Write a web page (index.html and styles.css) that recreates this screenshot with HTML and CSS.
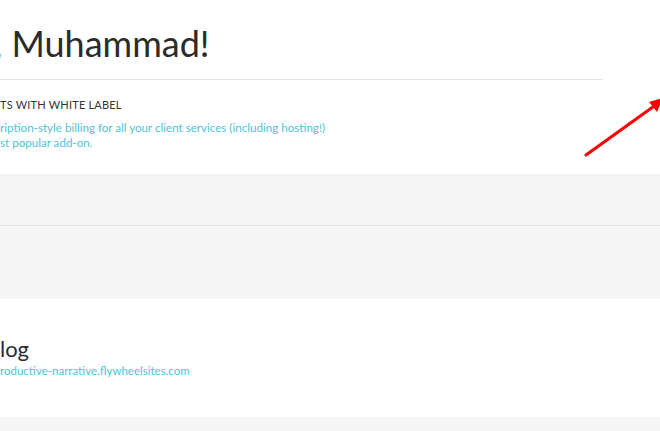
FILE: index.html
```html
<!DOCTYPE html>
<html>
<head>
<meta charset="utf-8">
<link rel="stylesheet" href="styles.css">
</head>
<body>
<div class="page">
  <header class="hero">
    <h1 class="greeting">, Muhammad!</h1>
  </header>
  <section class="promo">
    <h2 class="promo-title">TS WITH WHITE LABEL</h2>
    <p class="promo-text">ription-style billing for all your client services (including hosting!)<br>st popular add-on.</p>
    <svg class="arrow" width="80" height="60" viewBox="0 0 80 60">
      <line x1="3" y1="57" x2="74" y2="6" stroke="#ff0000" stroke-width="3" stroke-linecap="round"/>
      <polygon points="80,0 66,4 74,14" fill="#ff0000"/>
    </svg>
  </section>
  <section class="band">
    <div class="band-row"></div>
    <div class="band-row"></div>
  </section>
  <section class="site">
    <h3 class="site-name">log</h3>
    <a class="site-url">roductive-narrative.flywheelsites.com</a>
  </section>
  <section class="band-bottom"></section>
</div>
</body>
</html>
```
FILE: styles.css
```css
html, body {
  margin: 0;
  padding: 0;
  background: #fff;
  overflow: hidden;
}
body {
  font-family: Lato, "Open Sans", sans-serif;
  color: #333;
  width: 660px;
  height: 431px;
}
.page {
  display: flex;
  flex-direction: column;
}
.hero {
  width: 603px;
  height: 79px;
  border-bottom: 1px solid #e4e4e4;
  box-sizing: content-box;
}
.greeting {
  margin: 0 0 0 -6px;
  padding-top: 21px;
  font-size: 36px;
  font-weight: 400;
  line-height: 44px;
  color: #2b2b2b;
}
.promo {
  position: relative;
  height: 94px;
  padding-top: 18px;
  box-sizing: border-box;
}
.promo-title {
  margin: 0;
  font-size: 11px;
  font-weight: 400;
  letter-spacing: 0.2px;
  line-height: 14px;
  color: #333;
}
.promo-text {
  margin: 8px 0 0;
  font-size: 11.6px;
  line-height: 15px;
  color: #4ec3d8;
}
.arrow {
  position: absolute;
  left: 583px;
  top: 18px;
}
.band {
  background: #f5f5f5;
  height: 125px;
  display: flex;
  flex-direction: column;
}
.band-row {
  height: 51px;
  border-bottom: 1px solid #e2e2e2;
}
.band-row + .band-row {
  border-bottom: none;
  flex: 1;
}
.site {
  height: 118px;
  padding-top: 37px;
  box-sizing: border-box;
  display: flex;
  flex-direction: column;
}
.site-name {
  margin: 0;
  font-size: 22px;
  font-weight: 400;
  line-height: 26px;
  color: #2b2b2b;
}
.site-url {
  margin-top: 2px;
  font-size: 11.5px;
  line-height: 14px;
  color: #4ec3d8;
}
.band-bottom {
  background: #f5f5f5;
  height: 14px;
}
```
